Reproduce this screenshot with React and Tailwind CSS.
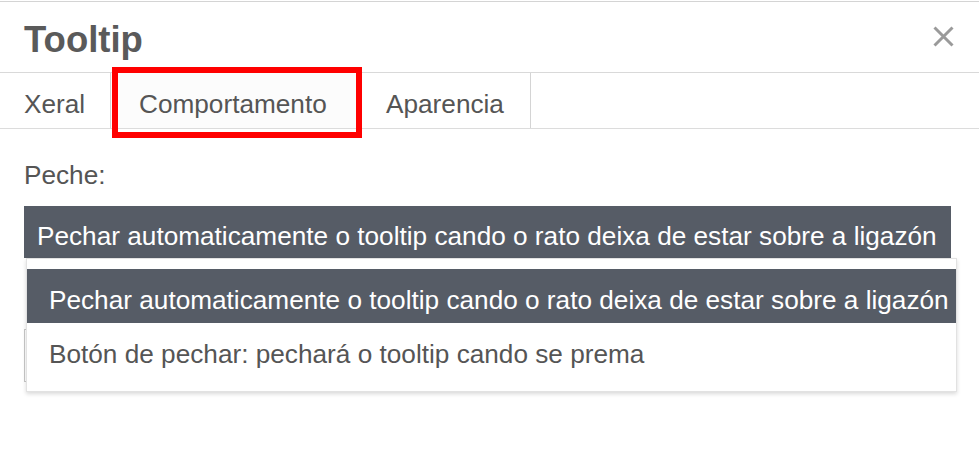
import React from "react";

export default function App() {
  const long = "Pechar automaticamente o tooltip cando o rato deixa de estar sobre a ligazón";
  return (
    <div className="relative w-[979px] h-[462px] overflow-hidden bg-white font-['Liberation_Sans',Arial,sans-serif]">
      <div className="h-[2px] border-b border-[#d4d4d4]" />
      <div className="flex h-[71px] items-start justify-between border-b border-[#d9d9d9] pl-6 pr-[25px]">
        <h1 className="pt-[16px] text-[36.5px] font-bold leading-[44px] text-[#5a5a5a]">Tooltip</h1>
        <svg width="21" height="21" viewBox="0 0 21 21" className="mt-[24px]">
          <path d="M1.5 1.5 L19.5 19.5 M19.5 1.5 L1.5 19.5" stroke="#9a9a9a" strokeWidth="3" />
        </svg>
      </div>
      <div className="flex h-[56px] border-b border-[#dcdcdc] text-[26.2px] leading-[30px] text-[#555]">
        <div className="w-[111px] border-r border-[#d4d4d4] pl-6 pt-[16px]">Xeral</div>
        <div className="w-[250px] bg-[#fcfcfc] pl-[28px] pt-[16px]">Comportamento</div>
        <div className="w-[170px] border-r border-[#d4d4d4] pl-[25px] pt-[16px]">Aparencia</div>
      </div>
      <div className="px-6 pt-[31px]">
        <div className="text-[26.2px] leading-[30px] text-[#555]">Peche:</div>
        <div className="mt-[16px] h-[52px] w-[927px] overflow-hidden whitespace-nowrap bg-[#565c66] pl-[13px] pt-[15px] text-[26.2px] leading-[30px] text-white">
          {long}
        </div>
        <div className="mt-[71px] h-[53px] w-[900px] border border-[#c8c8c8]" />
      </div>
      <div className="absolute left-[26px] top-[258px] w-[931px] border border-[#e2e2e2] bg-white pt-[10px] pb-[14px] shadow-[0_2px_4px_rgba(0,0,0,0.15)] text-[26.2px] leading-[30px]">
        <div className="h-[54px] whitespace-nowrap bg-[#565c66] pl-[22px] pt-[16px] text-white">{long}</div>
        <div className="h-[54px] whitespace-nowrap pl-[22px] pt-[16px] text-[#555]">Botón de pechar: pechará o tooltip cando se prema</div>
      </div>
      <div className="pointer-events-none absolute left-[112px] top-[67px] h-[71px] w-[250px] border-[6px] border-[#ff0000]" />
    </div>
  );
}
